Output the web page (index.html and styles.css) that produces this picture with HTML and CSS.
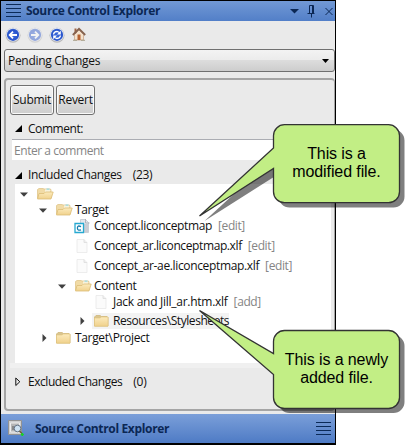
FILE: index.html
```html
<!DOCTYPE html>
<html lang="en">
<head>
<meta charset="utf-8">
<title>Source Control Explorer</title>
<link rel="stylesheet" href="styles.css">
</head>
<body>
<svg class="defs" width="0" height="0">
  <defs>
    <linearGradient id="fold" x1="0" y1="0" x2="0" y2="1"><stop offset="0" stop-color="#fcebbd"/><stop offset="1" stop-color="#f0d18c"/></linearGradient>
    <radialGradient id="ball" cx=".5" cy=".55" r=".55"><stop offset="0" stop-color="#3c6bdc"/><stop offset=".75" stop-color="#2854cc"/><stop offset="1" stop-color="#3563cf"/></radialGradient>
    <symbol id="open" viewBox="0 0 18 14"><path d="M1.500 11V2.500L3 1.500h4l1 .5h6.500l.5 1V11z" fill="#f1dba6" stroke="#e0c58c" stroke-width=".8"/><path d="M9 2.500l4-1 1.500 2-1 2H9z" fill="#f7f2dc"/><path d="M10.500 1.600h3v1h-3z" fill="#7fcfe0"/><path d="M1.500 12L3 6.500h5L9.500 5H17.200L15 12z" fill="url(#fold)" stroke="#dcbc76" stroke-width=".8"/></symbol>
    <symbol id="closed" viewBox="0 0 18 14"><path d="M1.500 12V3L3 1.500h4L8.500 2.500H14l1 1V12z" fill="#d9c590" stroke="#d0b87c" stroke-width=".8"/><path d="M1.500 4h5.500L8.500 3H15v9.200H1.500z" fill="url(#fold)" stroke="#e0c27a" stroke-width=".6"/></symbol>
    <symbol id="file" viewBox="0 0 12 14"><path d="M1 .5h7l3 3v10H1z" fill="#fbfbfb" stroke="#e9e9e9" stroke-width=".8"/><path d="M8 .5v3h3" fill="#f0f0f0" stroke="#dcdcdc" stroke-width=".8"/></symbol>
    <symbol id="down" viewBox="0 0 8 5"><path d="M0 .5h8L4 4.800z"/></symbol>
    <symbol id="right" viewBox="0 0 5 8"><path d="M.5 0v8l4-4z"/></symbol>
    <symbol id="corner" viewBox="0 0 7 7"><path d="M7 0v7H0z"/></symbol>
  </defs>
</svg>
<main class="panel">
  <header class="titlebar">
    <svg class="grip" width="16" height="14"><path d="M0 .5h15M0 4.500h15M0 8.500h15M0 12.500h15"/></svg>
    <h1 class="title">Source Control Explorer</h1>
    <svg class="winbtns" width="46" height="14"><path class="solid" d="M1 4h9L5.500 8.500z"/><path d="M20.500 8V.500h4V8M18.500 8.500h7M22.500 9v3.500M23.500 1v7M36.500 3l7 7M43.500 3l-7 7"/></svg>
  </header>
  <nav class="toolbar">
    <svg width="16" height="16" viewBox="0 0 16 16"><circle cx="8" cy="8.300" r="7.500" fill="#b9b9b9"/><circle cx="8" cy="7.700" r="6.900" fill="#e0e4f0"/><circle cx="8" cy="7.800" r="6.100" fill="url(#ball)"/><path d="M12 8H5M8 4.700L4.700 8 8 11.300" fill="none" stroke="#fff" stroke-width="1.800"/></svg>
    <svg class="dim" width="16" height="16" viewBox="0 0 16 16"><circle cx="8" cy="8.300" r="7.500" fill="#b9b9b9"/><circle cx="8" cy="7.700" r="6.900" fill="#e0e4f0"/><circle cx="8" cy="7.800" r="6.100" fill="url(#ball)"/><path d="M4 8h7M8 4.700L11.300 8 8 11.300" fill="none" stroke="#fff" stroke-width="1.800"/></svg>
    <svg width="16" height="16" viewBox="0 0 16 16"><circle cx="8" cy="8.300" r="7.500" fill="#b9b9b9"/><circle cx="8" cy="7.700" r="6.900" fill="#e0e4f0"/><circle cx="8" cy="7.800" r="6.100" fill="url(#ball)"/><path d="M4.500 7.500Q5 4.500 8 4.500L10.500 5.500M11.500 8.500Q11 11.500 8 11.500L5.500 10.500" fill="none" stroke="#fff" stroke-width="1.300"/><path d="M11.800 3.800v3.700H8zM4.200 12.200V8.500H8z" fill="#fff"/></svg>
    <svg width="16" height="16" viewBox="0 0 16 16"><path d="M3.500 7.500L8 3l4.500 4.500V13h-9z" fill="#f4e2cd" stroke="#c9a68a" stroke-width=".8"/><path d="M3.500 1.500h2V6l-2 1z" fill="#a06444"/><path d="M1.800 8L8 1.800l6.200 6.200" fill="none" stroke="#86634f" stroke-width="1.800"/><path d="M6.500 7.500h3V13h-3z" fill="#b5602f"/><path d="M2 13.300h4M10 13.300h4" stroke="#a9a38c"/></svg>
  </nav>
  <div class="combo"><span class="combo-text">Pending Changes</span><svg width="7" height="4"><path d="M0 0h7L3.500 4z"/></svg></div>
  <section class="group">
    <div class="buttons"><button class="submit">Submit</button><button class="revert">Revert</button></div>
    <div class="heading comment-head"><svg width="7" height="7"><use href="#corner"/></svg><span class="t-comment">Comment:</span></div>
    <div class="field"><span class="t-enter">Enter a comment</span></div>
    <div class="heading included"><svg width="7" height="7"><use href="#corner"/></svg><span class="t-included">Included Changes</span><span class="count">(23)</span></div>
    <div class="tree">
      <div class="row root"><svg class="arrow" width="8" height="5"><use href="#down"/></svg><svg class="folder" width="18" height="14"><use href="#open"/></svg></div>
      <div class="row short l1"><svg class="arrow" width="8" height="5"><use href="#down"/></svg><svg class="folder" width="18" height="14"><use href="#open"/></svg><span class="t-target">Target</span></div>
      <div class="row l2"><svg class="concept" width="16" height="15" viewBox="0 0 16 15"><path d="M6.500.500h5l3 3v10h-8z" fill="#e5e7ec" stroke="#c3c6ce" stroke-width=".8"/><path d="M11.500 0v4h4M10 6h4M10 8h4M10 10h4M10 12h4" fill="none" stroke="#a3a7b2" stroke-width=".8"/><path d="M1 4.500h8.500v9H1z" fill="#fff" stroke="#26a9d1" stroke-width="1.300"/><path d="M7 7.600Q3.400 5.900 3.400 9T7 10.800" fill="none" stroke="#187eae" stroke-width="1.300"/></svg><span class="t-map">Concept.liconceptmap</span><em>[edit]</em></div>
      <div class="row l2"><svg class="file" width="12" height="14"><use href="#file"/></svg><span class="t-ar">Concept_ar.liconceptmap.xlf</span><em>[edit]</em></div>
      <div class="row l2"><svg class="file" width="12" height="14"><use href="#file"/></svg><span class="t-ae">Concept_ar-ae.liconceptmap.xlf</span><em>[edit]</em></div>
      <div class="row l2a"><svg class="arrow" width="8" height="5"><use href="#down"/></svg><svg class="folder" width="18" height="14"><use href="#open"/></svg><span class="t-content">Content</span></div>
      <div class="row short l3"><svg class="file" width="12" height="14"><use href="#file"/></svg><span class="t-jack">Jack and Jill_ar.htm.xlf</span><em class="add">[add]</em></div>
      <div class="row l3a"><svg class="arrow" width="5" height="8"><use href="#right"/></svg><div class="selected"><svg class="folder" width="18" height="14"><use href="#closed"/></svg><span class="t-res">Resources\Stylesheets</span></div></div>
      <div class="row project"><svg class="arrow" width="5" height="8"><use href="#right"/></svg><svg class="folder" width="18" height="14"><use href="#closed"/></svg><span class="t-proj">Target\Project</span></div>
    </div>
    <div class="strip"></div>
    <div class="heading excluded"><svg width="6" height="10"><path d="M.8 1v7.500l4-3.750z" fill="none" stroke="#111"/></svg><span class="t-excluded">Excluded Changes</span><span class="count">(0)</span></div>
  </section>
  <footer class="bottom">
    <svg width="17" height="17" viewBox="0 0 17 17"><path d="M.5.500h13v14H.5z" fill="#cfcfcf" stroke="#929292"/><path d="M2.500 3h9v9h-9z" fill="#b6b6b6" stroke="#eee"/><path d="M4 6h3v4H4z" fill="#888"/><circle cx="9.500" cy="8.500" r="3.300" fill="#cfe3f3" stroke="#667689"/><path d="M11.500 11l2.500 2.500" stroke="#6b5a36" stroke-width="1.500"/><path d="M13.500 13h1.500v3h-1.500zM12.800 13.700h3v1.500h-3z" fill="#19d324"/></svg>
    <span class="title">Source Control Explorer</span>
    <svg class="grip" width="15" height="14"><path d="M0 .5h15M0 4.500h15M0 8.500h15M0 12.500h15"/></svg>
  </footer>
</main>
<aside class="callout modified">
  <svg width="215" height="105"><path class="shade" d="M90 5.500h104.500a11 11 0 0 1 11 11v56a11 11 0 0 1-11 11H90.500a11 11 0 0 1-11-11V50L5.500 97l74-68V16.500a11 11 0 0 1 11-11z"/><path class="bubble" d="M85.500.700h104a11 11 0 0 1 11 11v56a11 11 0 0 1-11 11h-104a11 11 0 0 1-11-11V44.500L.5 92l74-68V11.700a11 11 0 0 1 11-11z"/></svg>
  <p>This is a<br>modified file.</p>
</aside>
<aside class="callout added">
  <svg width="215" height="105"><path class="shade" d="M90.500 25h104a11 11 0 0 1 11 11v56a11 11 0 0 1-11 11h-104a11 11 0 0 1-11-11V36a11 11 0 0 1 11-11z"/><path class="bubble" d="M85.500 20.500h104a11 11 0 0 1 11 11v56a11 11 0 0 1-11 11h-104a11 11 0 0 1-11-11V64.500L.5.500l74 43v-12a11 11 0 0 1 11-11z"/></svg>
  <p>This is a newly<br>added file.</p>
</aside>
</body>
</html>
```
FILE: styles.css
```css
* { box-sizing: border-box; }
body { margin: 0; width: 414px; height: 445px; overflow: hidden; position: relative; background: #fff; color: #111; font: 12px/16px "Open Sans", "Noto Sans", sans-serif; }
svg { display: block; flex: none; }
.defs { position: absolute; }
span, em { white-space: nowrap; flex: none; }
.panel { width: 336px; height: 445px; border: 1px solid #000; border-bottom-width: 2px; background: #eaeaea; display: flex; flex-direction: column; }
.titlebar { height: 20px; display: flex; align-items: center; padding-left: 5px; background: linear-gradient(#7299d5, #527fc8); }
.grip { fill: none; stroke: #0b2a58; }
.title { margin: 0; font-size: 12px; line-height: 16px; font-weight: 700; color: #0b2754; letter-spacing: -.34px; }
.titlebar .title { margin-left: 4px; }
.winbtns { margin: 1px 0 0 auto; fill: none; stroke: #0b2754; }
.winbtns .solid { fill: #0b2754; stroke: none; }
.toolbar { height: 28px; padding: 6px 0 0 4px; display: flex; gap: 6px; }
.dim { opacity: .45; }
.combo { height: 23px; margin-left: 3px; padding: 0 5px 0 3px; border: 1px solid #707070; border-radius: 3px; display: flex; align-items: center; justify-content: space-between; background: linear-gradient(#f3f3f3 0, #ebebeb 50%, #dcdcdc 50%, #cdcdcd); }
.combo-text { font-size: 12px; letter-spacing: -.3px; }
.group { height: 333px; margin: 6px 0 0 3px; border: 2px solid #a5a5a5; border-right-width: 1px; border-radius: 4px; padding: 5px 0 0 4px; display: flex; flex-direction: column; }
.buttons { display: flex; gap: 2px; }
button { height: 30px; padding: 0; border: 1px solid #707070; border-radius: 3px; box-shadow: inset 0 0 0 1px #fafafa; background: linear-gradient(#f3f3f3, #ebebeb 50%, #dcdcdc 50%, #cdcdcd); font: 12px/16px "Open Sans", sans-serif; letter-spacing: -.3px; color: #111; }
.submit { width: 44px; }
.revert { width: 39px; }
.heading { display: flex; align-items: center; padding-left: 5px; }
.heading svg + span { margin-left: 6px; }
.comment-head { height: 24px; padding-top: 3px; }
.field { height: 21px; margin-left: 2px; border-top: 1px solid #abadb3; background: #fff; color: #858585; padding: 3px 0 0 2px; }
.included { height: 24px; padding-top: 6px; }
.count { margin-left: 11px; letter-spacing: -.3px; }
.tree { height: 179px; margin: 0 3px 0 5px; background: #fff; overflow: hidden; }
.row { height: 20px; display: flex; align-items: center; }
.row.root { padding-left: 5px; }
.short { height: 12px; }
.arrow { fill: #404040; }
.folder { margin-left: 7px; }
.root .folder, .l1 .folder, .l2a .folder { margin-left: 8px; }
.row span { margin-left: 2px; }
.l1 { padding-left: 24px; }
.l2 { padding-left: 61px; }
.l2 .concept { margin-left: -2px; width: 16px; }
.row .concept + span { margin-left: 4px; }
.row .file + span { margin-left: 6px; }
.l2a { padding-left: 43px; }
.l3 { padding-left: 80px; }
.l3a { padding-left: 65px; margin-top: 5px; height: 16px; }
.selected { display: flex; align-items: center; background: #f3f3f3; height: 16px; margin-left: 7px; }
.selected .folder { margin-left: 1px; }
.project { height: 17px; padding-left: 27px; }
.project .folder { margin-left: 8px; }
em { font-style: normal; color: #858585; margin-left: 6px; letter-spacing: -.4px; }
.strip { height: 5px; background: #f0f0f0; }
.excluded { height: 25px; padding-top: 2px; }
.heading.excluded svg + span { margin-left: 7px; }
.t-included, .row span { letter-spacing: -.35px; }
.t-comment, .t-enter, .t-excluded { letter-spacing: -.45px; }
.row .t-res { letter-spacing: -.43px; }
.row .t-jack { letter-spacing: -.27px; }
.row .t-ar { letter-spacing: -.39px; }
.bottom { margin-top: 3px; height: 29px; display: flex; align-items: center; padding: 0 4px 0 7px; background: linear-gradient(#7b9fd9, #4e7bc5); }
.bottom .title { margin-left: 10px; }
.bottom .grip { margin-left: auto; }
.callout { position: absolute; left: 199px; width: 215px; }
.modified { top: 123.500px; height: 105px; }
.added { top: 309.500px; height: 105px; }
.bubble { fill: #c2ee85; stroke: #333; stroke-width: 1.300; }
.shade { fill: rgba(0, 0, 0, .5); }
.callout p { position: absolute; left: 75px; width: 125px; top: 21px; margin: 0; text-align: center; color: #000; font: 16px/18px "Liberation Sans", sans-serif; letter-spacing: -.1px; }
.added p { top: 41px; }
```
